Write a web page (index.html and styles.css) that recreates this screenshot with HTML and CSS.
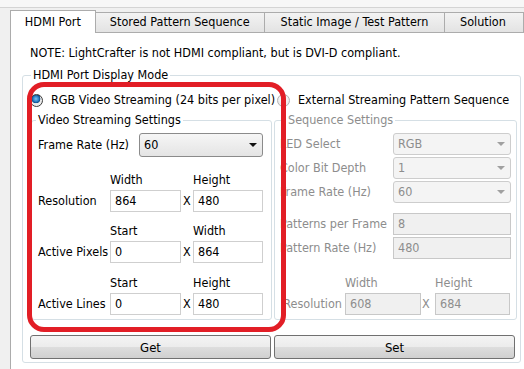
FILE: index.html
```html
<!DOCTYPE html>
<html lang="en">
<head>
  <meta charset="UTF-8">
  <meta name="viewport" content="width=device-width, initial-scale=1.0">
  <title>HDMI Port - LightCrafter</title>
  <link rel="stylesheet" href="styles.css">
</head>
<body>

  <div class="top-strip"></div>

  <div class="tabbar">
    <div class="tab active">HDMI Port</div>
    <div class="tab tab-stored">Stored Pattern Sequence</div>
    <div class="tab tab-static">Static Image / Test Pattern</div>
    <div class="tab tab-solution">Solution</div>
  </div>

  <div class="panel">
    <p class="note">NOTE: LightCrafter is not HDMI compliant, but is DVI-D compliant.</p>

    <fieldset class="group mode">
      <legend>HDMI Port Display Mode</legend>

      <div class="radios">
        <label class="radio checked"><span class="dot"></span>RGB Video Streaming (24 bits per pixel)</label>
        <label class="radio"><span class="dot"></span>External Streaming Pattern Sequence</label>
      </div>

      <div class="columns">
        <fieldset class="group video">
          <legend>Video Streaming Settings</legend>

          <div class="frame-row">
            <span class="lbl">Frame Rate (Hz)</span>
            <div class="combo"><span>60</span><span class="arrow"></span></div>
          </div>

          <div class="pair first">
            <span></span><span class="head">Width</span><span></span><span class="head">Height</span>
            <span class="lbl">Resolution</span>
            <div class="field">864</div>
            <span class="x">X</span>
            <div class="field">480</div>
          </div>

          <div class="pair second">
            <span></span><span class="head">Start</span><span></span><span class="head">Width</span>
            <span class="lbl">Active Pixels</span>
            <div class="field">0</div>
            <span class="x">X</span>
            <div class="field">864</div>
          </div>

          <div class="pair third">
            <span></span><span class="head">Start</span><span></span><span class="head">Height</span>
            <span class="lbl">Active Lines</span>
            <div class="field">0</div>
            <span class="x">X</span>
            <div class="field">480</div>
          </div>
        </fieldset>

        <fieldset class="group sequence disabled">
          <legend>Sequence Settings</legend>

          <div class="combos">
            <div class="row">
              <span class="lbl">LED Select</span>
              <div class="combo"><span>RGB</span><span class="arrow"></span></div>
            </div>
            <div class="row">
              <span class="lbl">Color Bit Depth</span>
              <div class="combo"><span>1</span><span class="arrow"></span></div>
            </div>
            <div class="row">
              <span class="lbl">Frame Rate (Hz)</span>
              <div class="combo"><span>60</span><span class="arrow"></span></div>
            </div>
          </div>

          <div class="combos inputs">
            <div class="row">
              <span class="lbl">Patterns per Frame</span>
              <div class="field">8</div>
            </div>
            <div class="row">
              <span class="lbl">Pattern Rate (Hz)</span>
              <div class="field">480</div>
            </div>
          </div>

          <div class="pair res">
            <span></span><span class="head">Width</span><span></span><span class="head">Height</span>
            <span class="lbl">Resolution</span>
            <div class="field">608</div>
            <span class="x">X</span>
            <div class="field">684</div>
          </div>
        </fieldset>
      </div>

      <div class="buttons">
        <button class="btn">Get</button>
        <button class="btn">Set</button>
      </div>
    </fieldset>
  </div>

  <!-- red marker drawn over the video settings -->
  <div class="highlight"></div>

</body>
</html>
```

FILE: styles.css
```css
* {
  margin: 0;
  padding: 0;
  box-sizing: border-box;
}

body {
  font-family: "DejaVu Sans Condensed", "DejaVu Sans", sans-serif;
  font-size: 12.5px;
  line-height: 16px;
  color: #000;
  background-color: #f0f0f0;
  width: 524px;
  height: 369px;
  overflow: hidden;
}

.top-strip {
  height: 8px;
  background-color: #f7f7f7;
  border-bottom: 1px solid #d4d4d4;
}

/* tabs */
.tabbar {
  display: flex;
  align-items: flex-end;
  height: 24px;
  padding-left: 10px;
}

.tab {
  height: 20px;
  line-height: 18px;
  text-align: center;
  white-space: nowrap;
  background: linear-gradient(#f3f3f3, #e3e3e3);
  border: 1px solid #acacac;
  border-left: none;
  border-bottom: none;
}

.tab.active {
  position: relative;
  z-index: 1;
  width: 87px;
  height: 23px;
  line-height: 22px;
  margin-bottom: -1px;
  background: #fff;
  border-left: 1px solid #acacac;
}

.tab-stored { width: 172px; }
.tab-static { width: 183px; }
.tab-solution { width: 80px; text-align: left; padding-left: 15px; }

.panel {
  height: 337px;
  margin-left: 10px;
  padding: 0 4px 0 11px;
  background-color: #fff;
  border-top: 1px solid #acacac;
  border-left: 1px solid #acacac;
}

.note {
  margin-top: 12px;
  padding-left: 8px;
  white-space: nowrap;
}

/* group boxes */
.group {
  border: 1px solid #d5dfe5;
  border-radius: 3px;
}

.group legend {
  padding: 0 2px;
  line-height: 16px;
  white-space: nowrap;
}

.mode {
  width: 498px;
  margin-top: 6px;
  padding: 0 3px 3px 8px;
}

.radios {
  display: grid;
  grid-template-columns: 247px auto;
  height: 24px;
  margin-top: 5px;
  margin-left: -1px;
  align-items: center;
}

.radio {
  display: flex;
  align-items: center;
  gap: 8px;
  white-space: nowrap;
}

.radio .dot {
  width: 13px;
  height: 13px;
  flex: none;
  border: 1px solid #b2b2b2;
  border-radius: 50%;
  background: radial-gradient(circle at 50% 40%, #ffffff, #e2e2e2);
}

.radio.checked .dot {
  border-color: #3a3a3a;
  background: radial-gradient(circle at 45% 35%, #7ec4f0 0, #2b7fc4 30%, #0c4a86 45%, #e8e8e8 50%, #f4f4f4 100%);
}

.columns {
  display: flex;
  gap: 2px;
}

.video {
  width: 241px;
  height: 208px;
  padding: 5px 0 0 6px;
}

.video legend {
  margin-left: -2px;
}

.sequence {
  width: 243px;
  height: 208px;
  padding: 5px 0 0 5px;
}

.sequence legend {
  margin-left: 6px;
}

.lbl {
  white-space: nowrap;
}

.frame-row {
  display: flex;
  align-items: center;
  height: 24px;
}

.frame-row .lbl {
  width: 101px;
}

.combo {
  display: flex;
  justify-content: space-between;
  align-items: center;
  height: 24px;
  width: 124px;
  padding: 0 5px 0 4px;
  background: linear-gradient(#f6f6f6, #e4e4e4);
  border: 1px solid #8b8b8b;
  border-radius: 3px;
}

.arrow {
  width: 0;
  height: 0;
  border-left: 4px solid transparent;
  border-right: 4px solid transparent;
  border-top: 4px solid #111;
}

.field {
  height: 22px;
  line-height: 20px;
  padding-left: 4px;
  background-color: #fff;
  border: 1px solid #cfcfcf;
  white-space: nowrap;
}

.pair {
  display: grid;
  grid-template-columns: 72px 71px 12px 70px;
  grid-template-rows: 16px 22px;
  row-gap: 2px;
  align-items: center;
}

.pair.first { margin-top: 15px; }
.pair.second { margin-top: 11px; }
.pair.third { margin-top: 12px; }

.x {
  padding-left: 2px;
}

/* disabled sequence settings */
.disabled {
  color: #8d8d8d;
}

.disabled .combo {
  width: 118px;
  height: 22px;
  background: #f4f4f4;
  border-color: #cdcdcd;
}

.disabled .arrow {
  border-top-color: #a0a0a0;
}

.disabled .field {
  background-color: #f0f0f0;
  border-color: #c8c8c8;
}

.combos {
  display: flex;
  flex-direction: column;
  gap: 2px;
}

.combos .row {
  display: grid;
  grid-template-columns: 113px 118px;
  align-items: center;
}

.combos.inputs {
  margin-top: 10px;
}

.pair.res {
  margin-top: 16px;
  grid-template-columns: 65px 76px 14px 75px;
}

.pair.res .lbl {
  text-align: right;
  padding-right: 3px;
}

.pair.res .x {
  padding-left: 1px;
}

/* buttons */
.buttons {
  display: flex;
  gap: 3px;
  margin-top: 15px;
}

.btn {
  width: 241px;
  height: 24px;
  font-family: inherit;
  font-size: 13px;
  color: #000;
  background: linear-gradient(#f4f4f4 0%, #ececec 48%, #dddddd 52%, #d0d0d0 100%);
  border: 1px solid #707070;
  border-radius: 3px;
}

.btn:first-child {
  margin-left: -1px;
}

.highlight {
  position: absolute;
  left: 27px;
  top: 82px;
  width: 259px;
  height: 250px;
  border: 5px solid #e21e26;
  border-radius: 17px;
  pointer-events: none;
}
```
